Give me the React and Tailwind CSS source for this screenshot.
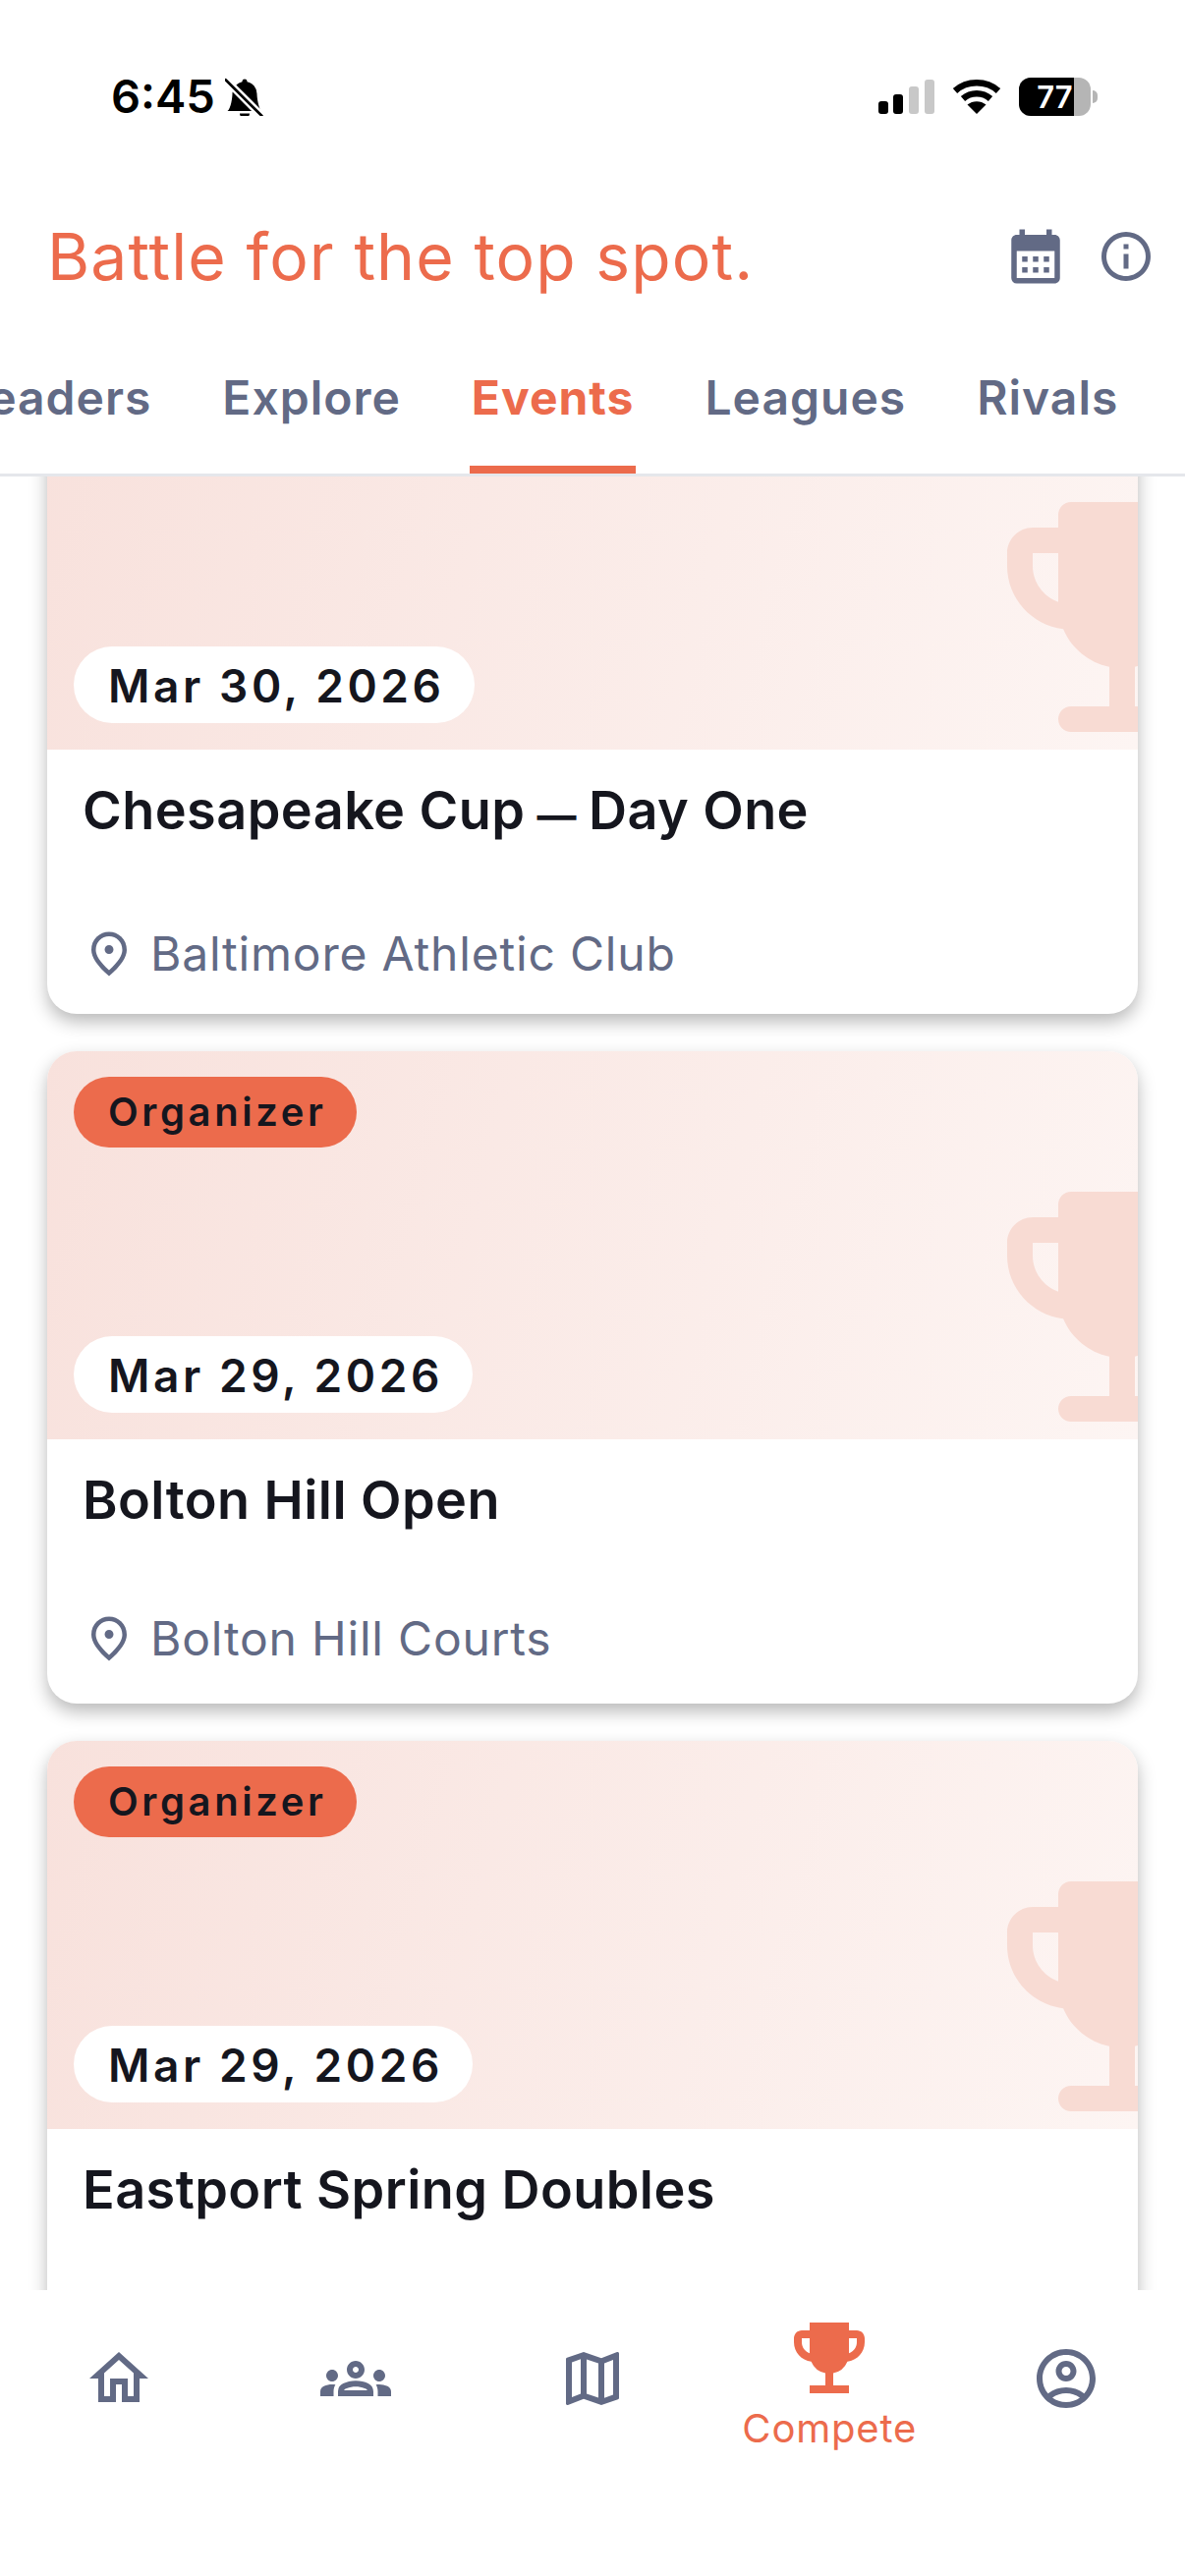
import React from 'react';
import { MdCalendarMonth, MdInfoOutline, MdOutlineHome, MdOutlineGroups, MdOutlineMap, MdOutlineAccountCircle, MdEmojiEvents } from 'react-icons/md';
import { BsBellSlashFill } from 'react-icons/bs';

const TABS = [
    { label: 'Leaders' },
    { label: 'Explore' },
    { label: 'Events', active: true },
    { label: 'Leagues' },
    { label: 'Rivals' },
];

const EVENTS = [
    { date: 'Mar 30, 2026', title: <>Chesapeake Cup <span className="text-[40px] font-bold mx-[-2px]">—</span> Day One</>, place: 'Baltimore Athletic Club' },
    { date: 'Mar 29, 2026', title: 'Bolton Hill Open', place: 'Bolton Hill Courts', organizer: true },
    { date: 'Mar 29, 2026', title: 'Eastport Spring Doubles', place: 'Eastport Courts', organizer: true },
];

const NAV = [
    { icon: MdOutlineHome },
    { icon: MdOutlineGroups },
    { icon: MdOutlineMap },
    { icon: MdEmojiEvents, label: 'Compete', active: true },
    { icon: MdOutlineAccountCircle },
];

const RoundedTrophy = ({ className }) => (
    <svg viewBox="0 0 24 24" fill="currentColor" className={className}>
        <path d="M19 5h-2V4c0-.55-.45-1-1-1H8c-.55 0-1 .45-1 1v1H5c-1.1 0-2 .9-2 2v1c0 2.55 1.92 4.63 4.39 4.94.63 1.5 1.98 2.63 3.61 2.96V19H8c-.55 0-1 .45-1 1s.45 1 1 1h8c.55 0 1-.45 1-1s-.45-1-1-1h-3v-3.1c1.63-.33 2.98-1.46 3.61-2.96C19.08 12.63 21 10.55 21 8V7c0-1.1-.9-2-2-2zM5 8V7h2v3.82C5.84 10.4 5 9.3 5 8zm14 0c0 1.3-.84 2.4-2 2.82V7h2v1z" />
    </svg>
);

const PlaceIcon = ({ className }) => (
    <svg viewBox="0 0 24 24" fill="currentColor" className={className}>
        <path d="M12 12c-1.1 0-2-.9-2-2s.9-2 2-2 2 .9 2 2-.9 2-2 2zm6-1.8C18 6.57 15.35 4 12 4s-6 2.57-6 6.2c0 2.34 1.95 5.44 6 9.14 4.05-3.7 6-6.8 6-9.14zM12 2c4.2 0 8 3.22 8 8.2 0 3.32-2.67 7.25-8 11.8-5.33-4.55-8-8.48-8-11.8C4 5.22 7.8 2 12 2z" />
    </svg>
);

const StatusBar = () => (
    <div className="h-[118px] shrink-0 pt-[75px] pl-[113px] pr-[89px] flex items-start justify-between text-black">
        <div className="flex items-center gap-[10px]">
            <span className="text-[47px] leading-[46px] font-semibold">6:45</span>
            <BsBellSlashFill className="w-[40px] h-[40px] -scale-x-100" />
        </div>
        <div className="flex items-center gap-[18px] h-[46px]">
            <svg viewBox="0 0 57 35" className="w-[57px] h-[35px]">
                <rect x="0" y="22" width="10" height="13" rx="3" fill="#000" />
                <rect x="15" y="15" width="10" height="20" rx="3" fill="#000" />
                <rect x="31" y="7" width="10" height="28" rx="3" fill="#c8c8c8" />
                <rect x="47" y="0" width="10" height="35" rx="3" fill="#c8c8c8" />
            </svg>
            <svg viewBox="0 0 50 36" className="w-[50px] h-[36px]" fill="none" stroke="#000" strokeWidth="6.5">
                <path d="M3 12.5C15 1.5 35 1.5 47 12.5" />
                <path d="M11 20.5C19 13.5 31 13.5 39 20.5" />
                <path fill="#000" stroke="none" d="M25 36L15.5 26.5C21 22 29 22 34.5 26.5Z" />
            </svg>
            <div className="flex items-center">
                <div className="relative w-[73px] h-[39px] rounded-[12px] bg-[#b5b5b5] overflow-hidden">
                    <div className="w-[56px] h-full bg-black" />
                    <span className="absolute inset-0 flex items-center justify-center text-white text-[31px] leading-none font-semibold">77</span>
                </div>
                <div className="w-[5px] h-[13px] rounded-r-full bg-[#b5b5b5] ml-[2px]" />
            </div>
        </div>
    </div>
);

const Tabs = () => (
    <div className="h-[126px] shrink-0 border-b-[3px] border-[#e5e7eb] overflow-hidden">
        <div className="flex gap-[68px] ml-[-42px] w-max h-full">
            {TABS.map((tab) => (
                <div
                    key={tab.label}
                    className={`h-full flex flex-col justify-end ${tab.active ? 'text-[#ec6b4c] font-bold' : 'text-[#626a85] font-semibold'}`}
                >
                    <div className="text-[48px] leading-[56px] tracking-[1px] pb-[41px] px-[2px]">{tab.label}</div>
                    <div className={`h-[8px] ${tab.active ? 'bg-[#ec6b4c]' : 'bg-transparent'}`} />
                </div>
            ))}
        </div>
    </div>
);

const EventCard = ({ event }) => (
    <div className="rounded-[30px] bg-white shadow-[0_8px_18px_rgba(0,0,0,0.28)] overflow-hidden shrink-0">
        <div className="relative h-[395px] bg-[linear-gradient(105deg,#f8e1dc,#fdf5f3)] overflow-hidden flex flex-col justify-between items-start px-[27px] pt-[26px] pb-[27px]">
            <RoundedTrophy className="absolute top-[104px] right-[-140px] w-[312px] h-[312px] text-[#f8dbd3]" />
            {event.organizer ? (
                <div className="relative h-[72px] pl-[35px] pr-[30px] rounded-full bg-[#ec6b4c] flex items-center text-[40px] font-semibold tracking-[3.6px] text-[#15161e]">Organizer</div>
            ) : <div />}
            <div className="relative h-[78px] pl-[35px] pr-[30px] rounded-full bg-white flex items-center text-[46px] leading-[80px] pt-[2px] font-semibold tracking-[3.6px] text-[#15161e]">{event.date}</div>
        </div>
        <div className="h-[269px] pl-[36px] pr-[37px] pt-[31px]">
            <div className="text-[54px] leading-[62px] font-semibold tracking-[0.44px] text-[#15161e]">{event.title}</div>
            <div className="mt-[82px] flex items-center gap-[15px] text-[#626a85]">
                <PlaceIcon className="w-[54px] h-[54px] shrink-0" />
                <span className="text-[48px] leading-[56px] tracking-[0.8px]">{event.place}</span>
            </div>
        </div>
    </div>
);

const BottomNav = () => (
    <div className="h-[291px] shrink-0 bg-white relative grid grid-cols-5">
        {NAV.map(({ icon: Icon, label, active }, i) => (
            <div key={i} className={`flex flex-col items-center ${active ? 'pt-[21px] text-[#ec6b4c]' : 'pt-[54px] text-[#626a85]'}`}>
                <Icon className={active ? 'w-[96px] h-[96px]' : 'w-[72px] h-[72px]'} />
                {label && <span className="text-[40px] leading-[46px] tracking-[0.8px] mt-[1px]">{label}</span>}
            </div>
        ))}
    </div>
);

export default function App() {
    return (
        <div className="w-[1206px] h-[2622px] bg-white flex flex-col overflow-hidden font-['Inter',sans-serif]">
            <StatusBar />
            {/* Header */}
            <div className="h-[241px] shrink-0 flex items-center justify-between pl-[48px] pr-[30px] pt-[45px]">
                <h1 className="text-[66px] leading-[78px] font-normal text-[#ec6b4c] tracking-[1.1px]">Battle for the top spot.</h1>
                <div className="flex items-center gap-[29px] text-[#626a85]">
                    <MdCalendarMonth className="w-[66px] h-[66px]" />
                    <MdInfoOutline className="w-[60px] h-[60px]" />
                </div>
            </div>
            <Tabs />
            {/* Event list */}
            <div className="flex-1 min-h-0 overflow-hidden px-[48px]">
                <div className="flex flex-col gap-[38px] mt-[-117px]">
                    {EVENTS.map((event) => <EventCard key={event.date + event.place} event={event} />)}
                </div>
            </div>
            <BottomNav />
        </div>
    );
}
